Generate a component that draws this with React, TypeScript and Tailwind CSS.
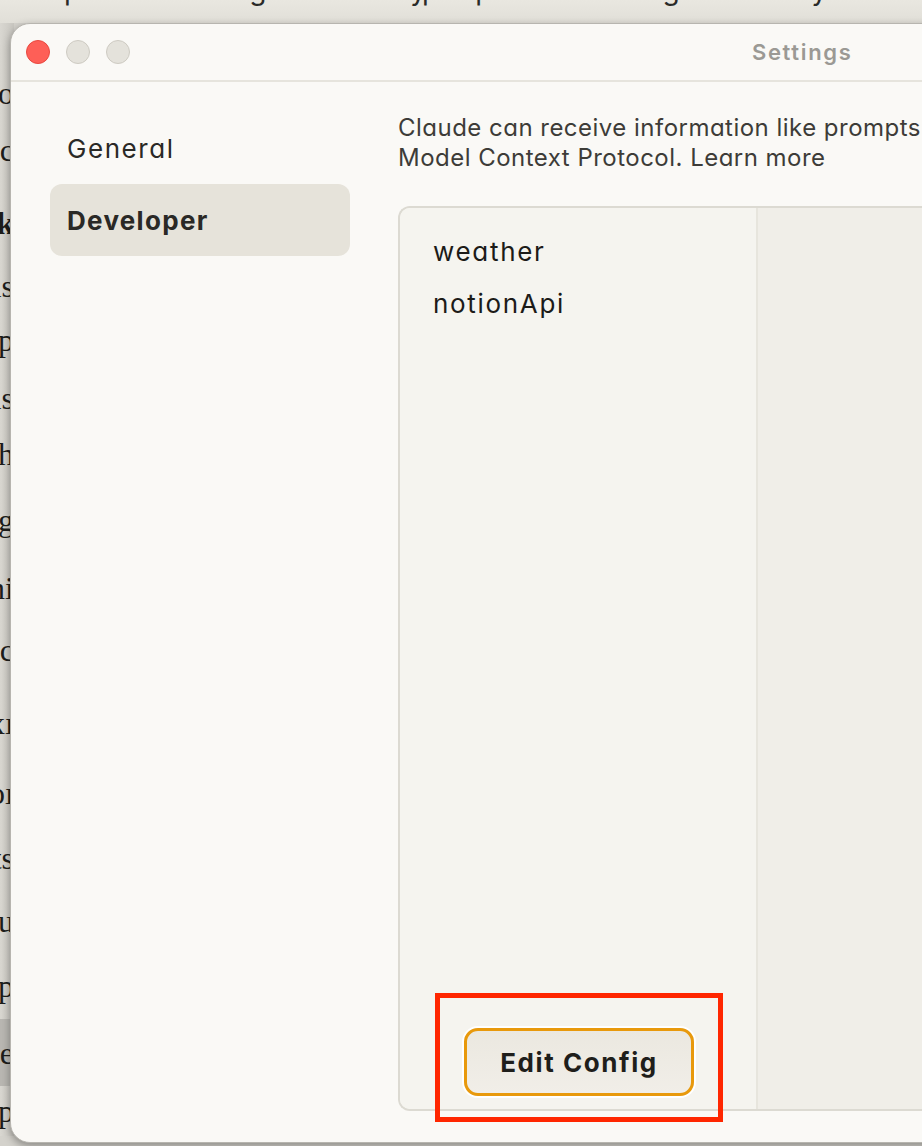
import React from "react";

const sans = "font-['Inter','Noto_Sans',sans-serif] [font-feature-settings:'cv11']";

function LeftLine({ h, text, bold, dark }: { h: string; text: string; bold?: boolean; dark?: boolean }) {
  return (
    <div className={`${h} flex items-center justify-end w-[14px] ${dark ? "bg-[#b9b7b2]" : ""}`}>
      <span className={`whitespace-nowrap font-['Liberation_Serif',serif] text-[32px] text-[#1d1d1b] ${bold ? "font-bold" : ""}`}>
        {text}
      </span>
    </div>
  );
}

export default function App() {
  return (
    <div className={`relative w-[922px] h-[1146px] overflow-hidden bg-[#d4d2cc] ${sans}`}>
      {/* background: top strip of a window behind */}
      <div className="h-[23px] overflow-hidden bg-gradient-to-b from-[#e9e7e0] to-[#e1dfd8]">
        <div className="flex -mt-[24px] leading-[28px] text-[28px] text-[#2a2a28]">
          <span className="ml-[64px]">p</span>
          <span className="ml-[168px]">g</span>
          <span className="ml-[144px]">y</span>
          <span className="ml-[-4px]">p</span>
          <span className="ml-[36px]">p</span>
          <span className="ml-[170px]">g</span>
          <span className="ml-[132px]">y</span>
        </div>
      </div>
      {/* background: left strip text */}
      <div className="flex flex-col bg-gradient-to-r from-[#d9d7d1] to-[#c9c7c1] w-[14px]">
        <div className="h-[50px]" />
        <LeftLine h="h-[40px]" text="yo" />
        <LeftLine h="h-[74px]" text="oc" />
        <LeftLine h="h-[72px]" text="k" bold />
        <LeftLine h="h-[54px]" text="is" />
        <LeftLine h="h-[53px]" text="p" />
        <LeftLine h="h-[63px]" text="is" />
        <LeftLine h="h-[50px]" text="h" />
        <LeftLine h="h-[82px]" text="eg" />
        <LeftLine h="h-[53px]" text="ni" />
        <LeftLine h="h-[72px]" text="nc" />
        <LeftLine h="h-[73px]" text="xı" />
        <LeftLine h="h-[67px]" text="oı" />
        <LeftLine h="h-[63px]" text="ts" />
        <LeftLine h="h-[64px]" text="u" />
        <LeftLine h="h-[66px]" text="ep" />
        <LeftLine h="h-[67px]" text="e" dark />
        <LeftLine h="h-[50px]" text="p" />
      </div>

      {/* Settings window */}
      <div className="absolute left-[10px] top-[23px] w-[1000px] h-[1120px] rounded-[20px] border border-[#b7b5af] bg-[#faf9f6] shadow-[0_3px_8px_rgba(0,0,0,0.35)] overflow-hidden flex flex-col">
        {/* title bar */}
        <div className="h-[58px] shrink-0 flex items-center pl-[15px] border-b-2 border-[#e6e4dd]">
          <div className="flex gap-[16px]">
            <div className="w-[24px] h-[24px] rounded-full bg-[#fe5f57] border border-[#e8483f]" />
            <div className="w-[24px] h-[24px] rounded-full bg-[#e4e2db] border border-[#cdcac2]" />
            <div className="w-[24px] h-[24px] rounded-full bg-[#e4e2db] border border-[#cdcac2]" />
          </div>
          <div className="ml-[622px] text-[22px] font-semibold tracking-[0.075em] text-[#9b9994]">Settings</div>
        </div>

        {/* body */}
        <div className="flex flex-1 pl-[39px] pt-[30px]">
          {/* sidebar */}
          <div className="w-[300px] shrink-0 flex flex-col">
            <div className="h-[72px] flex items-center px-[17px] rounded-[12px] text-[26px] tracking-[0.06em] text-[#2a2926]">
              General
            </div>
            <div className="h-[72px] flex items-center px-[17px] rounded-[12px] bg-[#e6e3da] text-[26px] font-bold tracking-[0.05em] text-[#2a2926]">
              Developer
            </div>
          </div>

          {/* content */}
          <div className="ml-[48px] flex-1 flex flex-col pt-[1px]">
            <p className="text-[24px] leading-[30px] tracking-[0.02em] text-[#3d3c38] whitespace-nowrap">
              Claude can receive information like prompts and attachments from specialized servers using
              <br />
              Model Context Protocol. Learn more
            </p>
            <div className="mt-[33px] h-[905px] flex rounded-l-[12px] border-2 border-r-0 border-[#dcdad2] overflow-hidden">
              <div className="w-[358px] shrink-0 flex flex-col justify-between bg-[#f5f4ef] border-r-2 border-[#e7e5dd]">
                <div className="pt-[18px] pl-[33px] flex flex-col text-[26px] leading-[52px] tracking-[0.065em] text-[#1c1b18]">
                  <div>weather</div>
                  <div>notionApi</div>
                </div>
                <div className="pl-[64px] pb-[13px]">
                  <button className="w-[230px] h-[68px] rounded-[14px] border-[3px] border-[#e8990c] bg-gradient-to-b from-[#ebe8e0] to-[#f1eee8] shadow-[0_0_0_2px_#ffffff] text-[26px] font-bold tracking-[0.06em] text-[#1f1e1b]">
                    Edit Config
                  </button>
                </div>
              </div>
              <div className="flex-1 bg-[#f0eee8]" />
            </div>
          </div>
        </div>
      </div>

      {/* annotation */}
      <div className="absolute left-[435px] top-[993px] w-[288px] h-[129px] border-[5px] border-[#ff2600]" />
    </div>
  );
}
